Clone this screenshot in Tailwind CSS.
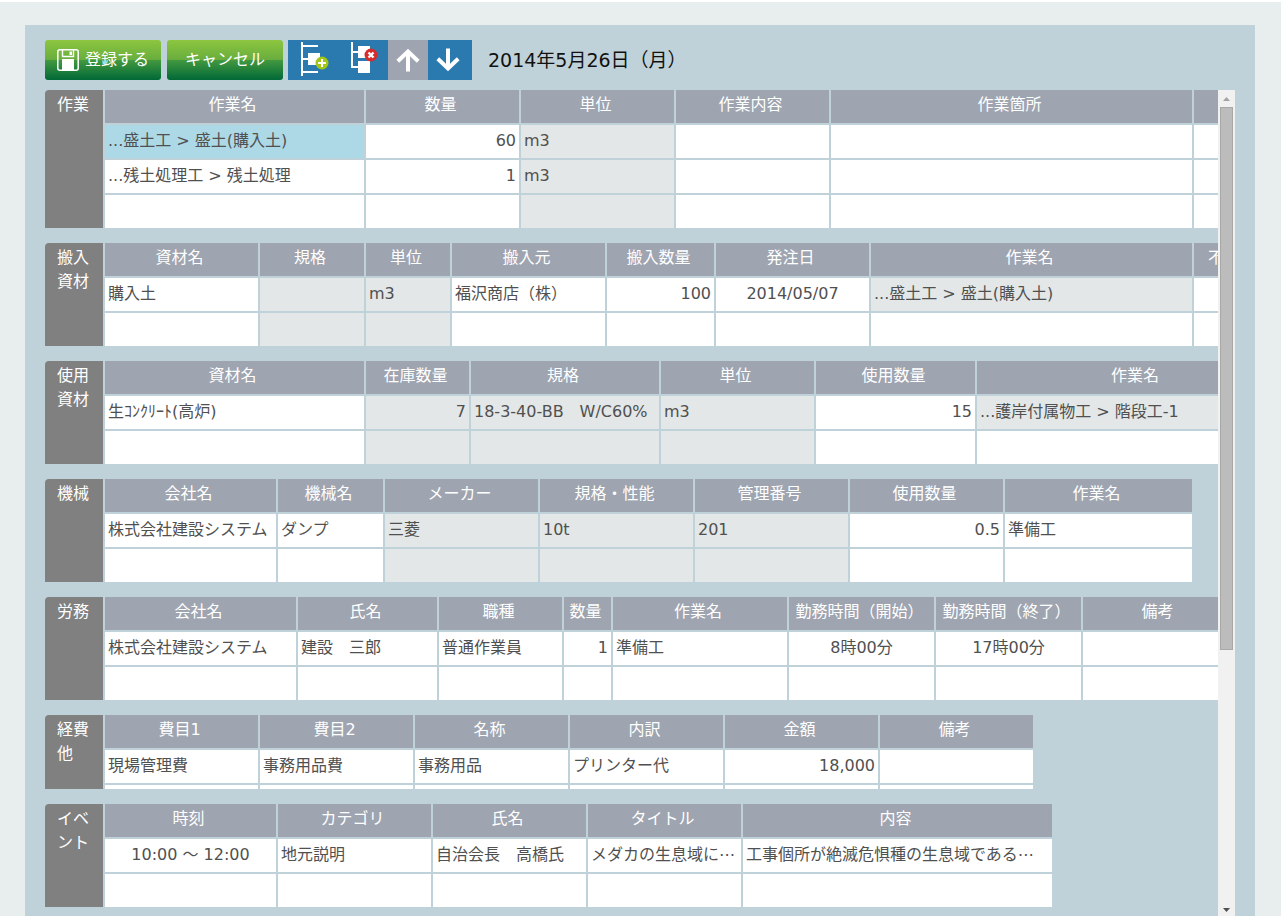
<!DOCTYPE html>
<html lang="ja">
<head>
<meta charset="utf-8">
<title>作業日報</title>
<script src="https://cdn.jsdelivr.net/npm/@tailwindcss/browser@4"></script>
</head>
<body class="h-screen overflow-hidden border-t-2 border-white bg-[#e8edee] font-['DejaVu_Sans','Noto_Sans_CJK_JP',sans-serif] text-base text-[#505050]">
<main class="mt-[23px] mr-[26px] ml-[25px] flex h-full flex-col bg-[#c0d2d9] px-5 pt-[15px]">

  <header class="flex h-10 shrink-0 items-center">
    <button type="button" class="flex h-10 w-[116px] items-center justify-center gap-[6px] rounded-[3px] bg-[linear-gradient(to_bottom,#8dc63f_0%,#68ad3e_50%,#43993f_50%,#006837_100%)] text-base text-white">
      <svg class="size-[22px]" viewBox="0 0 22 22" aria-hidden="true">
        <rect x="0.800" y="0.800" width="20.400" height="20.400" rx="2" fill="none" stroke="#fff" stroke-width="1.500"/>
        <path d="M5.500 1v6.500h11V1" fill="none" stroke="#fff" stroke-width="1.400"/>
        <rect x="12.500" y="2.500" width="2.500" height="3.500" fill="#fff"/>
        <rect x="5" y="10" width="12" height="11" fill="#fff"/>
      </svg>
      登録する
    </button>
    <button type="button" class="ml-[6px] h-10 w-[116px] rounded-[3px] bg-[linear-gradient(to_bottom,#8dc63f_0%,#68ad3e_50%,#43993f_50%,#006837_100%)] text-base text-white">キャンセル</button>
    <div class="ml-[5px] flex h-10">
      <button type="button" aria-label="行を追加" class="flex w-[50px] items-center justify-center bg-[#2a7aaf]">
        <svg class="h-10 w-[50px]" viewBox="0 0 50 40" aria-hidden="true">
          <path d="M14 2V36M14 6H30M14 19H21M14 32H30" stroke="#fff" stroke-width="2" fill="none"/>
          <rect x="20" y="13" width="12" height="12" fill="#fff"/>
          <circle cx="34" cy="23" r="6.500" fill="#a2c517"/>
          <path d="M34 19v8M30 23h8" stroke="#fff" stroke-width="2"/>
        </svg>
      </button>
      <button type="button" aria-label="行を削除" class="flex w-[50px] items-center justify-center bg-[#2a7aaf]">
        <svg class="h-10 w-[50px]" viewBox="0 0 50 40" aria-hidden="true">
          <path d="M14 2V27H21M14 12H21" stroke="#fff" stroke-width="2" fill="none"/>
          <rect x="20" y="6" width="12" height="12" fill="#fff"/>
          <rect x="20" y="21" width="12" height="12" fill="#fff"/>
          <circle cx="33" cy="15" r="6.500" fill="#d92b2b"/>
          <path d="M30.500 12.500l5 5M35.500 12.500l-5 5" stroke="#fff" stroke-width="2.400"/>
        </svg>
      </button>
      <button type="button" aria-label="上へ移動" class="flex w-10 items-center justify-center bg-[#9ea4b0]">
        <svg class="size-6" viewBox="0 0 24 24" aria-hidden="true"><path d="M12 23.500V4M1.800 13.200L12 3.500L22.200 13.200" stroke="#fff" stroke-width="4" fill="none"/></svg>
      </button>
      <button type="button" aria-label="下へ移動" class="flex w-11 items-center bg-[#2a7aaf] px-2">
        <svg class="size-6" viewBox="0 0 24 24" aria-hidden="true"><path d="M12 0.500V20M1.800 10.800L12 20.500L22.200 10.800" stroke="#fff" stroke-width="4" fill="none"/></svg>
      </button>
    </div>
    <h1 class="ml-4 text-[19px] text-[#111]">2014年5月26日（月）</h1>
  </header>

  <div class="mt-[10px] flex min-h-0 flex-1">
    <div class="flex min-w-0 flex-1 flex-col gap-[15px] overflow-hidden [&_h2]:w-[58px] [&_h2]:shrink-0 [&_h2]:rounded-tl-[4px] [&_h2]:bg-[#808080] [&_h2]:px-[12px] [&_h2]:pt-[3px] [&_h2]:leading-6 [&_h2]:text-white [&_section]:flex [&_section]:shrink-0 [&_section]:overflow-hidden [&_table]:shrink-0 [&_table]:table-fixed [&_table]:border-separate [&_table]:border-spacing-0 [&_th]:h-[33px] [&_th]:overflow-hidden [&_th]:border-l-2 [&_th]:border-[#c0d2d9] [&_th]:bg-[#9ea4b0] [&_th]:pr-1 [&_th]:pb-[3px] [&_th]:text-center [&_th]:leading-6 [&_th]:font-normal [&_th]:whitespace-nowrap [&_th]:text-white [&_td]:h-[35px] [&_td]:overflow-hidden [&_td]:border-t-2 [&_td]:border-l-2 [&_td]:border-[#c0d2d9] [&_td]:px-[3px] [&_td]:pb-[2px] [&_td]:leading-6 [&_td]:text-ellipsis [&_td]:whitespace-nowrap">

      <section>
        <h2>作業</h2>
        <table class="w-[1168px]">
          <thead><tr><th class="w-[261px]">作業名</th><th class="w-[155px]">数量</th><th class="w-[155px]">単位</th><th class="w-[155px]">作業内容</th><th class="w-[363px]">作業箇所</th><th class="w-[79px]"></th></tr></thead>
          <tbody>
            <tr class="bg-white"><td class="bg-[#add8e6]">...盛土工 &gt; 盛土(購入土)</td><td class="text-right">60</td><td class="bg-[#e3e7e7]">m3</td><td></td><td></td><td></td></tr>
            <tr class="bg-white"><td>...残土処理工 &gt; 残土処理</td><td class="text-right">1</td><td class="bg-[#e3e7e7]">m3</td><td></td><td></td><td></td></tr>
            <tr class="bg-white"><td></td><td></td><td class="bg-[#e3e7e7]"></td><td></td><td></td><td></td></tr>
          </tbody>
        </table>
      </section>

      <section>
        <h2>搬入資材</h2>
        <table class="w-[1183px]">
          <thead><tr><th class="w-[155px]">資材名</th><th class="w-[106px]">規格</th><th class="w-[86px]">単位</th><th class="w-[155px]">搬入元</th><th class="w-[109px]">搬入数量</th><th class="w-[155px]">発注日</th><th class="w-[323px]">作業名</th><th class="w-[98px]">不足数量</th></tr></thead>
          <tbody>
            <tr class="bg-white"><td>購入土</td><td class="bg-[#e3e7e7]"></td><td class="bg-[#e3e7e7]">m3</td><td>福沢商店（株）</td><td class="text-right">100</td><td class="text-center">2014/05/07</td><td class="bg-[#e3e7e7]">...盛土工 &gt; 盛土(購入土)</td><td></td></tr>
            <tr class="bg-white"><td></td><td class="bg-[#e3e7e7]"></td><td class="bg-[#e3e7e7]"></td><td></td><td></td><td></td><td></td><td></td></tr>
          </tbody>
        </table>
      </section>

      <section>
        <h2>使用資材</h2>
        <table class="w-[1194px]">
          <thead><tr><th class="w-[261px]">資材名</th><th class="w-[105px]">在庫数量</th><th class="w-[190px]">規格</th><th class="w-[155px]">単位</th><th class="w-[161px]">使用数量</th><th class="w-[322px]">作業名</th></tr></thead>
          <tbody>
            <tr class="bg-white"><td>生ｺﾝｸﾘｰﾄ(高炉)</td><td class="bg-[#e3e7e7] text-right">7</td><td class="bg-[#e3e7e7]">18-3-40-BB　W/C60%</td><td class="bg-[#e3e7e7]">m3</td><td class="text-right">15</td><td class="bg-[#e3e7e7]">...護岸付属物工 &gt; 階段工-1</td></tr>
            <tr class="bg-white"><td></td><td class="bg-[#e3e7e7]"></td><td class="bg-[#e3e7e7]"></td><td class="bg-[#e3e7e7]"></td><td></td><td></td></tr>
          </tbody>
        </table>
      </section>

      <section>
        <h2>機械</h2>
        <table class="w-[1089px]">
          <thead><tr><th class="w-[173px]">会社名</th><th class="w-[107px]">機械名</th><th class="w-[155px]">メーカー</th><th class="w-[155px]">規格・性能</th><th class="w-[155px]">管理番号</th><th class="w-[155px]">使用数量</th><th class="w-[189px]">作業名</th></tr></thead>
          <tbody>
            <tr class="bg-white"><td>株式会社建設システム</td><td>ダンプ</td><td class="bg-[#e3e7e7]">三菱</td><td class="bg-[#e3e7e7]">10t</td><td class="bg-[#e3e7e7]">201</td><td class="text-right">0.5</td><td>準備工</td></tr>
            <tr class="bg-white"><td></td><td></td><td class="bg-[#e3e7e7]"></td><td class="bg-[#e3e7e7]"></td><td class="bg-[#e3e7e7]"></td><td></td><td></td></tr>
          </tbody>
        </table>
      </section>

      <section>
        <h2>労務</h2>
        <table class="w-[1133px]">
          <thead><tr><th class="w-[193px]">会社名</th><th class="w-[141px]">氏名</th><th class="w-[125px]">職種</th><th class="w-[49px]">数量</th><th class="w-[176px]">作業名</th><th class="w-[147px]">勤務時間（開始）</th><th class="w-[147px]">勤務時間（終了）</th><th class="w-[155px]">備考</th></tr></thead>
          <tbody>
            <tr class="bg-white"><td>株式会社建設システム</td><td>建設　三郎</td><td>普通作業員</td><td class="text-right">1</td><td>準備工</td><td class="text-center">8時00分</td><td class="text-center">17時00分</td><td></td></tr>
            <tr class="bg-white"><td></td><td></td><td></td><td></td><td></td><td></td><td></td><td></td></tr>
          </tbody>
        </table>
      </section>

      <section class="h-[74px]">
        <h2>経費他</h2>
        <table class="w-[930px]">
          <thead><tr><th>費目1</th><th>費目2</th><th>名称</th><th>内訳</th><th>金額</th><th>備考</th></tr></thead>
          <tbody>
            <tr class="bg-white"><td>現場管理費</td><td>事務用品費</td><td>事務用品</td><td>プリンター代</td><td class="text-right">18,000</td><td></td></tr>
            <tr class="bg-white"><td></td><td></td><td></td><td></td><td></td><td></td></tr>
          </tbody>
        </table>
      </section>

      <section>
        <h2>イベント</h2>
        <table class="w-[949px]">
          <thead><tr><th class="w-[173px]">時刻</th><th class="w-[155px]">カテゴリ</th><th class="w-[155px]">氏名</th><th class="w-[155px]">タイトル</th><th class="w-[311px]">内容</th></tr></thead>
          <tbody>
            <tr class="bg-white"><td class="text-center">10:00 ～ 12:00</td><td>地元説明</td><td>自治会長　高橋氏</td><td>メダカの生息域に⋯</td><td>工事個所が絶滅危惧種の生息域である⋯</td></tr>
            <tr class="bg-white"><td></td><td></td><td></td><td></td><td></td></tr>
          </tbody>
        </table>
      </section>
    </div>

    <div class="mb-[23px] flex w-[17px] shrink-0 flex-col items-center justify-between bg-[#f1f1f1]" aria-hidden="true">
      <div class="flex min-h-0 flex-1 flex-col items-center">
        <svg class="h-[17px] w-[7px] shrink-0" viewBox="0 0 7 17"><path d="M0 11L3.500 7L7 11Z" fill="#a3a3a3"/></svg>
        <div class="h-[543px] w-[13px] border border-[#a8a8a8] bg-[#bcbcbc]"></div>
      </div>
      <svg class="h-[17px] w-[7px] shrink-0" viewBox="0 0 7 17"><path d="M0 9L3.500 13L7 9Z" fill="#505050"/></svg>
    </div>
  </div>
</main>
</body>
</html>
